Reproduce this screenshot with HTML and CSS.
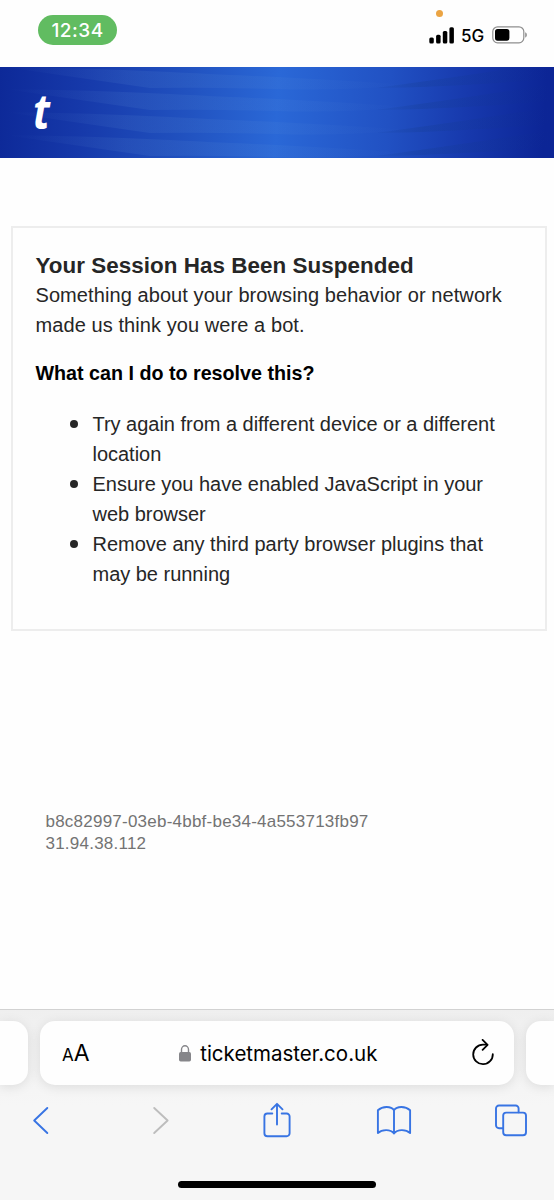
FILE: index.html
```html
<!DOCTYPE html>
<html lang="en">
<head>
    <meta charset="UTF-8">
    <meta name="viewport" content="width=device-width, initial-scale=1.0">
    <title>Your Session Has Been Suspended</title>
    <link rel="stylesheet" href="styles.css">
</head>
<body>
    <div class="status-bar">
        <span class="time">12:34</span>
        <div class="status-right">
            <span class="mic-dot"></span>
            <svg class="signal" width="26" height="17" viewBox="0 0 26 17">
                <rect x="0.3" y="10.5" width="4.5" height="6" rx="1.5"/>
                <rect x="7.1" y="7.8" width="4.5" height="8.7" rx="1.5"/>
                <rect x="13.8" y="4" width="4.5" height="12.5" rx="1.5"/>
                <rect x="20.4" y="0.3" width="4.5" height="16.2" rx="1.5"/>
            </svg>
            <span class="network">5G</span>
            <svg class="battery" width="36" height="18" viewBox="0 0 36 18">
                <rect x="0.8" y="0.8" width="31" height="16" rx="4.8" fill="none" stroke="#8e8e8e" stroke-width="1.2"/>
                <rect x="3" y="3" width="14.4" height="11.7" rx="2.6"/>
                <path d="M33.2 6.2c2.2.7 2.2 4.6 0 5.4z" fill="#8e8e8e"/>
            </svg>
        </div>
    </div>

    <header class="banner">
        <svg class="waves" viewBox="0 0 554 91" preserveAspectRatio="none">
            <defs>
                <linearGradient id="light" x1="0" x2="1" y1="0" y2="0">
                    <stop offset="0" stop-color="#6c9bd8" stop-opacity="0"/>
                    <stop offset="0.3" stop-color="#6c9bd8" stop-opacity="0.12"/>
                    <stop offset="0.65" stop-color="#6c9bd8" stop-opacity="0.09"/>
                    <stop offset="1" stop-color="#6c9bd8" stop-opacity="0"/>
                </linearGradient>
                <linearGradient id="dark" x1="0" x2="1" y1="0" y2="0">
                    <stop offset="0" stop-color="#123880" stop-opacity="0.05"/>
                    <stop offset="0.25" stop-color="#123880" stop-opacity="0.2"/>
                    <stop offset="1" stop-color="#123880" stop-opacity="0"/>
                </linearGradient>
                <g id="wave">
                    <path fill="url(#light)" d="M5 0Q90 1 170 5T277 10Q340 13 410 18Q340 24 277 22Q205 20 150 21Q80 11 5 0z"/>
                    <path fill="url(#dark)" d="M375 21Q445 12 554 -5V12Q450 20 375 21z"/>
                </g>
            </defs>
            <use href="#wave" y="0"/>
            <use href="#wave" y="22"/>
            <use href="#wave" y="45"/>
            <use href="#wave" y="68"/>
        </svg>
        <span class="logo">t</span>
    </header>

    <main class="content">
        <section class="card">
            <h1>Your Session Has Been Suspended</h1>
            <p>Something about your browsing behavior or network made us think you were a bot.</p>
            <h2>What can I do to resolve this?</h2>
            <ul>
                <li>Try again from a different device or a different location</li>
                <li>Ensure you have enabled JavaScript in your web browser</li>
                <li>Remove any third party browser plugins that may be running</li>
            </ul>
        </section>
        <div class="request-info">
            <div>b8c82997-03eb-4bbf-be34-4a553713fb97</div>
            <div class="ip">31.94.38.112</div>
        </div>
    </main>

    <footer class="browser-bar">
        <div class="tabs">
            <div class="tab tab-prev"></div>
            <div class="tab address">
                <span class="text-size"><small>A</small>A</span>
                <span class="url">
                    <svg width="12" height="17" viewBox="0 0 12 17">
                        <rect x="0" y="7" width="12" height="9.5" rx="1.7" fill="#86868a"/>
                        <path d="M2.5 8V4.6a3.5 3.8 0 0 1 7 0V8" fill="none" stroke="#86868a" stroke-width="1.4"/>
                    </svg>
                    ticketmaster.co.uk
                </span>
                <svg class="reload" width="24" height="28" viewBox="0 0 24 28" fill="none" stroke="#000" stroke-width="1.8" stroke-linecap="round" stroke-linejoin="round">
                    <path d="M15.5 5.6H12A9.8 9.8 0 1 0 21.8 15.2"/>
                    <path d="M11.6 0.9L16.6 5.8L11.6 10.8"/>
                </svg>
            </div>
            <div class="tab tab-next"></div>
        </div>
        <nav class="toolbar">
            <svg width="36" height="36" viewBox="0 0 36 36"><path d="M24.3 6L11.2 18.5L24.3 31"/></svg>
            <svg class="disabled" width="36" height="36" viewBox="0 0 36 36"><path d="M13.2 6L26.6 18.5L13.2 31"/></svg>
            <svg width="36" height="36" viewBox="0 0 36 36">
                <path d="M14.3 11.5H9.4a3 3 0 0 0-3 3v16.7a3 3 0 0 0 3 3h19.2a3 3 0 0 0 3-3V14.5a3 3 0 0 0-3-3h-4.9"/>
                <path d="M19 22.5V2M13.5 7.3L19 1.8L24.5 7.3"/>
            </svg>
            <svg width="36" height="36" viewBox="0 0 36 36">
                <path d="M18 8.2C15 3.8 6.5 4 1.9 8.2V31C6 27.3 14.5 27 18 31.5C21.5 27 30 27.3 34.1 31V8.2C29.5 4 21 3.8 18 8.2zM18 8.2V31.5"/>
            </svg>
            <svg width="36" height="36" viewBox="0 0 36 36">
                <path d="M9.8 26.2H6a3 3 0 0 1-3-3V6.5a3 3 0 0 1 3-3h16.6a3 3 0 0 1 3 3v3.8"/>
                <rect x="10.2" y="10.6" width="22.8" height="22.6" rx="3"/>
            </svg>
        </nav>
        <div class="home-indicator"></div>
    </footer>
</body>
</html>
```

FILE: styles.css
```css
* {
    box-sizing: border-box;
}

body {
    margin: 0;
    height: 1200px;
    display: flex;
    flex-direction: column;
    overflow: hidden;
    background: #fefefe;
    color: #262626;
    font-family: "Liberation Sans", Arial, sans-serif;
}

.status-bar {
    height: 67px;
    display: flex;
    justify-content: space-between;
    align-items: flex-start;
    padding: 15px 26px 0 38px;
    color: #000;
    font-family: Inter, sans-serif;
}

.time {
    width: 79px;
    height: 30px;
    border-radius: 15px;
    background: #61bc61;
    color: #fff;
    font-size: 19px;
    font-weight: 500;
    line-height: 31px;
    letter-spacing: 0.5px;
    text-align: center;
}

.status-right {
    position: relative;
    display: flex;
    align-items: center;
    padding-top: 10px;
}

.mic-dot {
    position: absolute;
    top: -5px;
    left: 7px;
    width: 7px;
    height: 7px;
    border-radius: 50%;
    background: #eba443;
}

.network {
    width: 24px;
    margin: 2px 7px 0 6px;
    font-size: 17px;
    font-weight: 500;
    line-height: 18px;
}

.banner {
    position: relative;
    height: 91px;
    background: linear-gradient(93deg, #0d2998 0%, #1639aa 15%, #2152c0 34%, #2a68d7 50%, #2151c3 70%, #1739ad 84%, #0c2596 98%);
}

.waves {
    display: block;
    width: 100%;
    height: 91px;
}

.logo {
    position: absolute;
    left: 33px;
    top: 13px;
    color: #fff;
    font-family: "Open Sans", sans-serif;
    font-size: 49px;
    font-style: italic;
    font-weight: 700;
    line-height: 60px;
    transform: scaleX(0.84);
    transform-origin: left;
}

.content {
    flex: 1;
    padding: 68px 7px 0 11px;
}

.card {
    height: 405px;
    padding: 22px 20px 0 22.5px;
    border: 2px solid #ededed;
    font-size: 20px;
    line-height: 30px;
}

.card h1 {
    margin: 0;
    font-size: 22.4px;
    line-height: 32px;
    letter-spacing: 0.05px;
}

.card p {
    margin: -2px 0 0;
    letter-spacing: 0.08px;
}

.card h2 {
    margin: 18px 0 21px;
    color: #000;
    font-size: 19.7px;
    line-height: 30px;
}

.card ul {
    margin: 0;
    padding-left: 34px;
    list-style: none;
}

.card li {
    display: flex;
    gap: 15px;
    letter-spacing: -0.02px;
}

.card li::before {
    content: "";
    flex: none;
    width: 8px;
    height: 8px;
    margin-top: 11px;
    border-radius: 50%;
    background: #262626;
}

.request-info {
    margin: 180px 0 0 34.5px;
    color: #737373;
    font-size: 17px;
    line-height: 21.5px;
    letter-spacing: 0.23px;
}

.browser-bar {
    height: 191px;
    border-top: 1px solid #d2d2d2;
    background: linear-gradient(#efefef, #f6f6f6 95px);
}

.tabs {
    display: flex;
    justify-content: space-between;
    padding-top: 11px;
}

.tab {
    height: 64px;
    border-radius: 15px;
    background: #fefefe;
    box-shadow: 0 2px 12px rgba(0, 0, 0, 0.1);
}

.tab-prev {
    width: 28px;
    border-radius: 0 15px 15px 0;
}

.tab-next {
    width: 28px;
    border-radius: 15px 0 0 15px;
}

.address {
    width: 474px;
    display: flex;
    justify-content: space-between;
    align-items: center;
    padding: 0 19px 0 22px;
    color: #000;
    font-family: Inter, sans-serif;
    font-size: 20.5px;
}

.text-size {
    font-size: 23px;
}

.text-size small {
    font-size: 17px;
}

.url {
    display: flex;
    align-items: center;
    gap: 9px;
    margin-right: 4px;
}

.toolbar {
    display: flex;
    justify-content: space-between;
    padding: 17px 25px 0;
    fill: none;
    stroke: #3874e3;
    stroke-width: 1.9;
    stroke-linecap: round;
    stroke-linejoin: round;
}

.toolbar svg:first-child {
    margin-left: -2px;
}

.toolbar .disabled {
    stroke: #bdbdbd;
}

.home-indicator {
    width: 198px;
    height: 7px;
    margin: 43px auto 0;
    border-radius: 4px;
    background: #000;
}
```
